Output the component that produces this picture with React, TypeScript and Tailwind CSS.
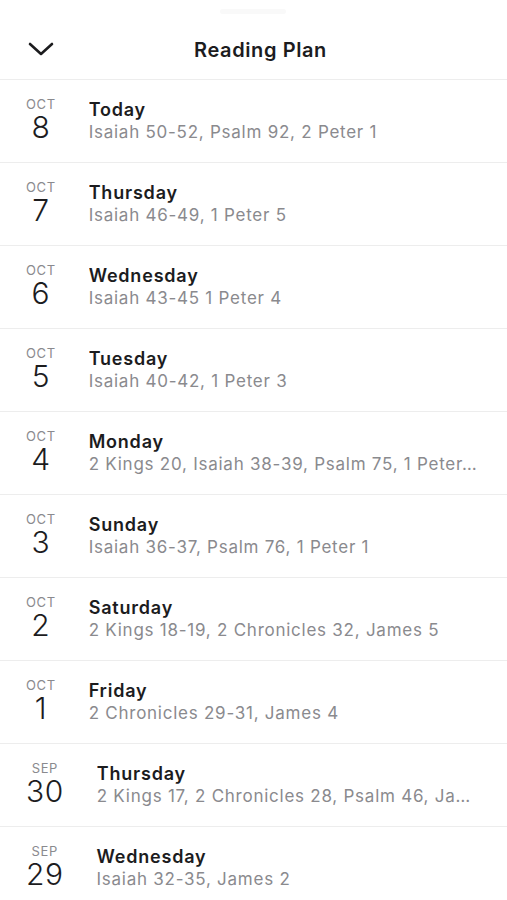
import React from "react";

const rows = [
  { m: "OCT", d: "8", t: "Today", s: "Isaiah 50-52, Psalm 92, 2 Peter 1" },
  { m: "OCT", d: "7", t: "Thursday", s: "Isaiah 46-49, 1 Peter 5" },
  { m: "OCT", d: "6", t: "Wednesday", s: "Isaiah 43-45 1 Peter 4" },
  { m: "OCT", d: "5", t: "Tuesday", s: "Isaiah 40-42, 1 Peter 3" },
  { m: "OCT", d: "4", t: "Monday", s: "2 Kings 20, Isaiah 38-39, Psalm 75, 1 Peter…" },
  { m: "OCT", d: "3", t: "Sunday", s: "Isaiah 36-37, Psalm 76, 1 Peter 1" },
  { m: "OCT", d: "2", t: "Saturday", s: "2 Kings 18-19, 2 Chronicles 32, James 5" },
  { m: "OCT", d: "1", t: "Friday", s: "2 Chronicles 29-31, James 4" },
  { m: "SEP", d: "30", t: "Thursday", s: "2 Kings 17, 2 Chronicles 28, Psalm 46, Ja…" },
  { m: "SEP", d: "29", t: "Wednesday", s: "Isaiah 32-35, James 2" },
];

export default function App() {
  return (
    <div
      className="w-[507px] h-[900px] overflow-hidden bg-white text-[#1c1c1e]"
      style={{ fontFamily: "Inter, 'Noto Sans', sans-serif" }}
    >
      <div className="h-[80px] relative flex items-center justify-center border-b border-[#ededed] pt-[20px] pl-[14px]">
        <div className="absolute top-[9px] left-[220px] w-[66px] h-[5px] rounded-full bg-[#f9f9f9]" />
        <svg
          className="absolute left-[27px] top-[40px]"
          width="28"
          height="18"
          viewBox="0 0 28 18"
          fill="none"
        >
          <path d="M3 4 L14 14 L25 4" stroke="#1c1c1e" strokeWidth="2.6" strokeLinecap="round" strokeLinejoin="round" />
        </svg>
        <span className="text-[20px] leading-[24px] font-semibold tracking-[0.6px]">Reading Plan</span>
      </div>
      {rows.map((r, i) => (
        <div key={i} className="h-[83px] flex items-center border-b border-[#ededed] pl-[26px] pr-[22px]">
          <div className="flex flex-col items-center shrink-0 mt-[-2px]">
            <span className="text-[13px] leading-[16px] text-[#8a8a8e] tracking-[0.6px]">{r.m}</span>
            <span className="text-[30px] leading-[36px] font-light text-[#1c1c1e] tracking-[0.5px] mt-[-3px]">{r.d}</span>
          </div>
          <div className="min-w-0 flex-1 ml-[33px] flex flex-col mt-[-1px]">
            <span className="text-[18px] leading-[22px] font-semibold tracking-[0.8px] truncate">{r.t}</span>
            <span className="text-[17px] leading-[22px] text-[#8a8a8e] tracking-[0.75px] truncate">{r.s}</span>
          </div>
        </div>
      ))}
    </div>
  );
}
